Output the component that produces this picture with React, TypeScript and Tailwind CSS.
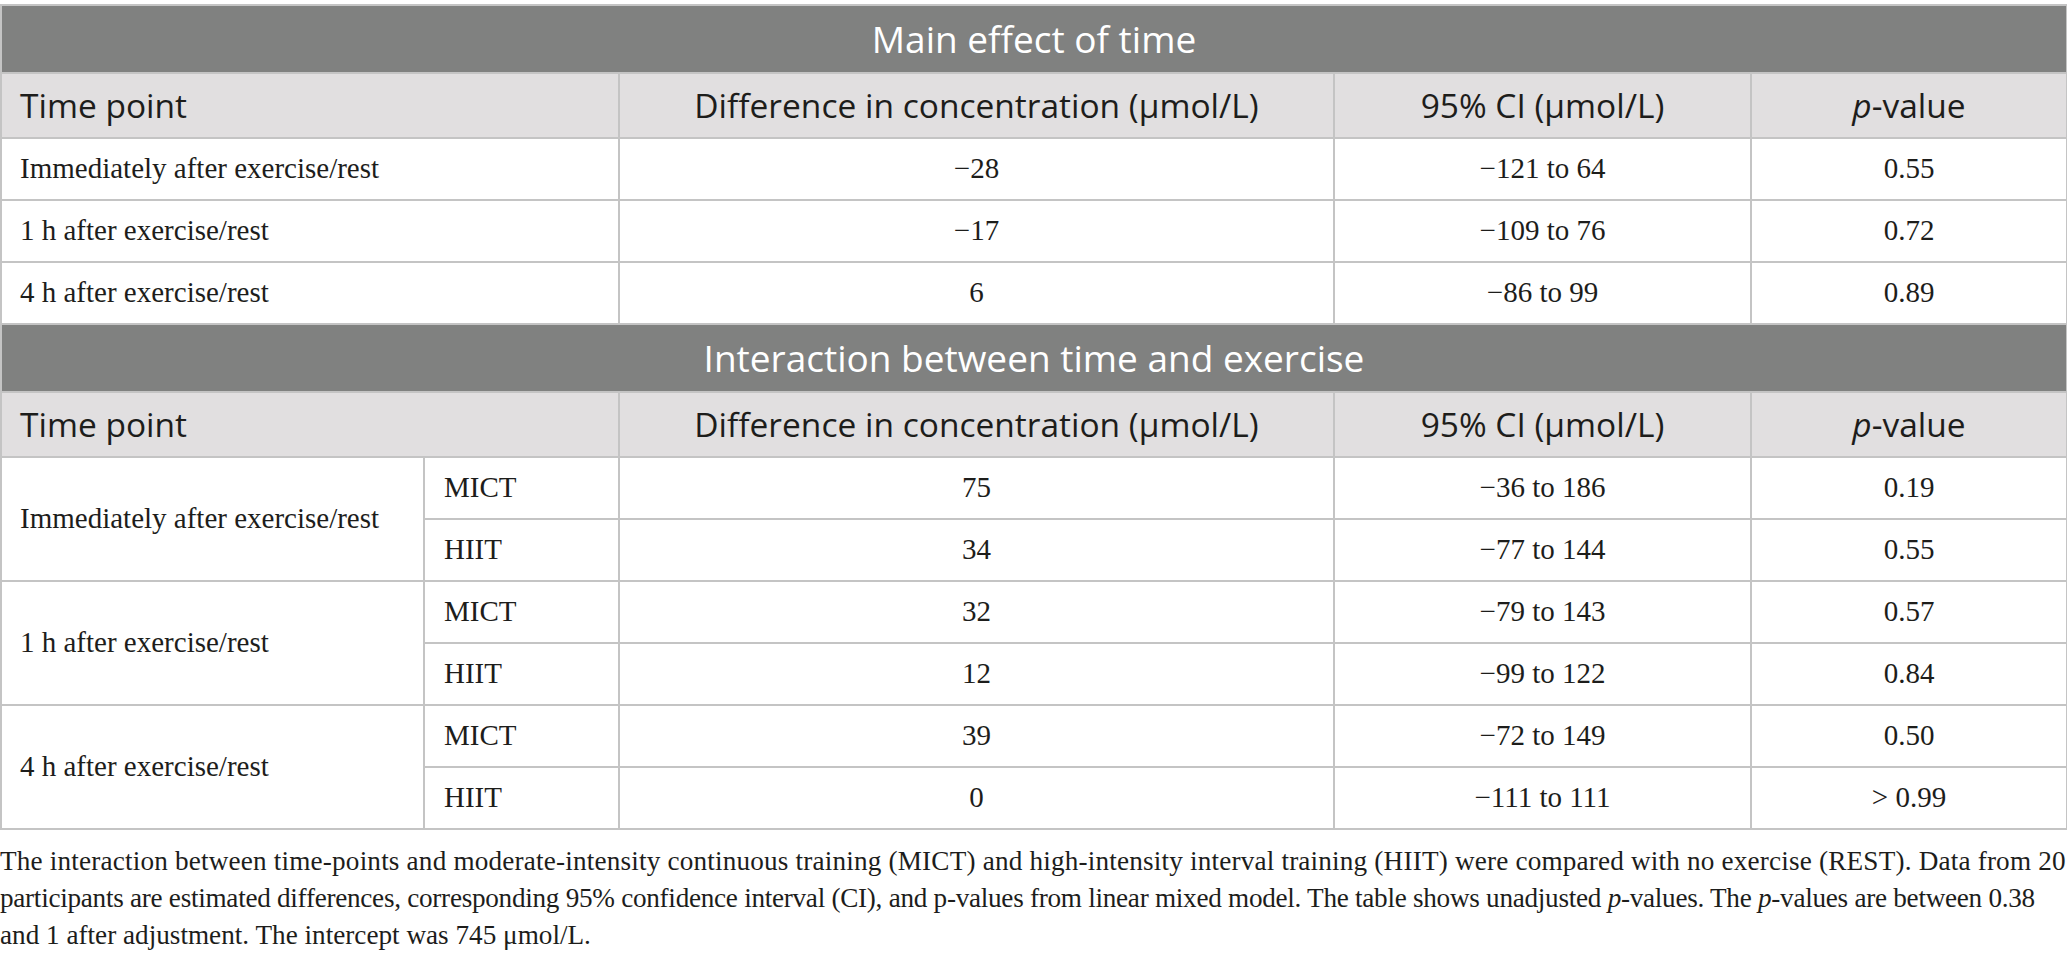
const sans = "font-['Open_Sans','Noto_Sans',sans-serif]";
const serif = "font-['Liberation_Serif','Times_New_Roman',serif]";

const cell = "border-2 border-[#c4c4c4] text-[#1d1d1b]";

const mainRows = [
  { label: "Immediately after exercise/rest", diff: "−28", ci: "−121 to 64", p: "0.55" },
  { label: "1 h after exercise/rest", diff: "−17", ci: "−109 to 76", p: "0.72" },
  { label: "4 h after exercise/rest", diff: "6", ci: "−86 to 99", p: "0.89" },
];

const interaction = [
  {
    label: "Immediately after exercise/rest",
    rows: [
      { group: "MICT", diff: "75", ci: "−36 to 186", p: "0.19" },
      { group: "HIIT", diff: "34", ci: "−77 to 144", p: "0.55" },
    ],
  },
  {
    label: "1 h after exercise/rest",
    rows: [
      { group: "MICT", diff: "32", ci: "−79 to 143", p: "0.57" },
      { group: "HIIT", diff: "12", ci: "−99 to 122", p: "0.84" },
    ],
  },
  {
    label: "4 h after exercise/rest",
    rows: [
      { group: "MICT", diff: "39", ci: "−72 to 149", p: "0.50" },
      { group: "HIIT", diff: "0", ci: "−111 to 111", p: "> 0.99" },
    ],
  },
];

const TitleRow = ({ text }: { text: string }) => (
  <tr className="h-[68px]">
    <td
      colSpan={5}
      className={`border-2 border-[#c4c4c4] bg-[#808180] text-center text-white text-[37px] ${sans}`}
    >
      {text}
    </td>
  </tr>
);

const HeaderRow = () => (
  <tr className={`h-[65px] bg-[#e1dfe0] text-[33.5px] ${sans}`}>
    <td colSpan={2} className={`${cell} pl-[18px] text-left`}>
      Time point
    </td>
    <td className={`${cell} text-center`}>Difference in concentration (μmol/L)</td>
    <td className={`${cell} text-center`}>95% CI (μmol/L)</td>
    <td className={`${cell} text-center`}>
      <span className="italic">p</span>-value
    </td>
  </tr>
);

export default function App() {
  return (
    <div className="w-[2067px] bg-white pt-[4px]">
      <table className="w-[2066px] table-fixed border-collapse">
        <colgroup>
          <col className="w-[423px]" />
          <col className="w-[195px]" />
          <col className="w-[715px]" />
          <col className="w-[417px]" />
          <col className="w-[316px]" />
        </colgroup>
        <tbody className={`${serif} text-[29px]`}>
          <TitleRow text="Main effect of time" />
          <HeaderRow />
          {mainRows.map((r) => (
            <tr key={r.label} className="h-[62px]">
              <td colSpan={2} className={`${cell} pl-[18px]`}>
                {r.label}
              </td>
              <td className={`${cell} text-center`}>{r.diff}</td>
              <td className={`${cell} text-center`}>{r.ci}</td>
              <td className={`${cell} text-center`}>{r.p}</td>
            </tr>
          ))}
          <TitleRow text="Interaction between time and exercise" />
          <HeaderRow />
          {interaction.map((g) =>
            g.rows.map((r, i) => (
              <tr key={g.label + r.group} className="h-[62px]">
                {i === 0 && (
                  <td rowSpan={2} className={`${cell} pl-[18px]`}>
                    {g.label}
                  </td>
                )}
                <td className={`${cell} pl-[19px]`}>{r.group}</td>
                <td className={`${cell} text-center`}>{r.diff}</td>
                <td className={`${cell} text-center`}>{r.ci}</td>
                <td className={`${cell} text-center`}>{r.p}</td>
              </tr>
            ))
          )}
        </tbody>
      </table>
      <div className={`mt-[13px] text-[27.2px] leading-[37px] text-[#1d1d1b] ${serif}`}>
        <div className="whitespace-nowrap tracking-[0.18px]">
          The interaction between time-points and moderate-intensity continuous training (MICT) and high-intensity
          interval training (HIIT) were compared with no exercise (REST). Data from 20
        </div>
        <div className="whitespace-nowrap tracking-[-0.28px]">
          participants are estimated differences, corresponding 95% confidence interval (CI), and p-values from linear
          mixed model. The table shows unadjusted <span className="italic">p</span>-values. The{" "}
          <span className="italic">p</span>-values are between 0.38
        </div>
        <div className="whitespace-nowrap">and 1 after adjustment. The intercept was 745 μmol/L.</div>
      </div>
    </div>
  );
}
